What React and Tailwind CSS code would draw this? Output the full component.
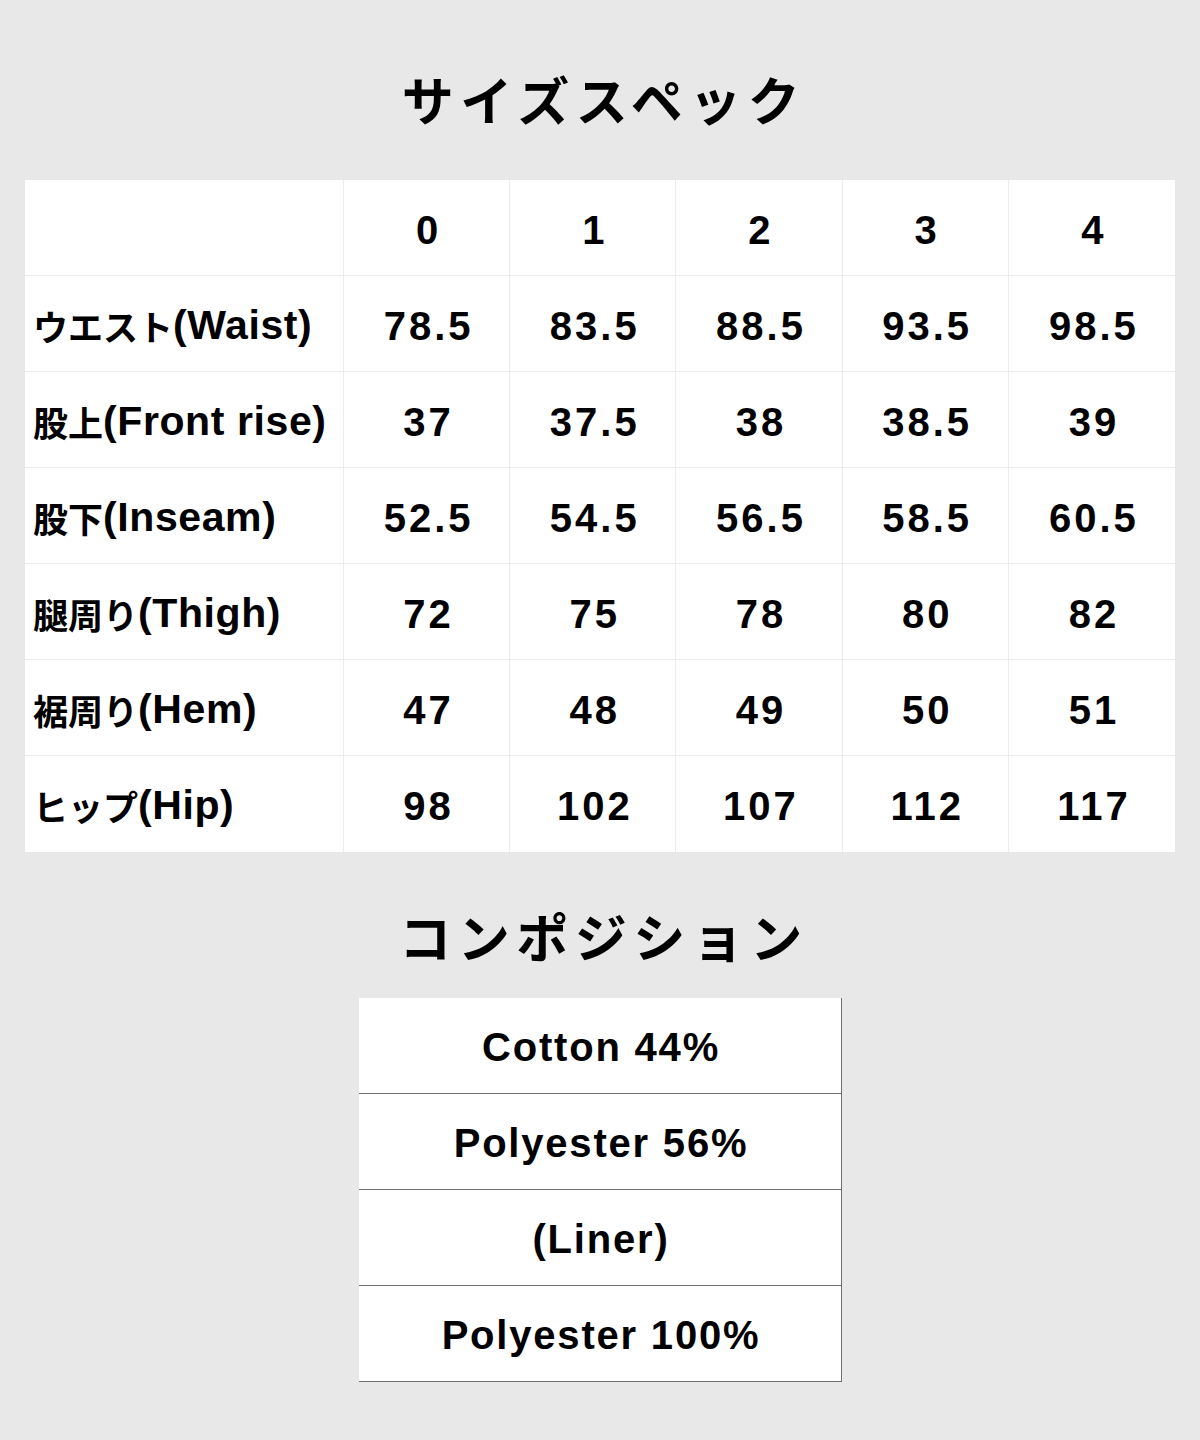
import React from "react";

const sizes = ["0", "1", "2", "3", "4"];

const specs = [
  { jp: "ウエスト", en: "(Waist)", values: ["78.5", "83.5", "88.5", "93.5", "98.5"] },
  { jp: "股上", en: "(Front rise)", values: ["37", "37.5", "38", "38.5", "39"] },
  { jp: "股下", en: "(Inseam)", values: ["52.5", "54.5", "56.5", "58.5", "60.5"] },
  { jp: "腿周り", en: "(Thigh)", values: ["72", "75", "78", "80", "82"] },
  { jp: "裾周り", en: "(Hem)", values: ["47", "48", "49", "50", "51"] },
  { jp: "ヒップ", en: "(Hip)", values: ["98", "102", "107", "112", "117"] },
];

const composition = ["Cotton 44%", "Polyester 56%", "(Liner)", "Polyester 100%"];

const Heading = ({ children, className }) => (
  <div className={`flex items-center justify-center pl-[8px] ${className}`}>
    <h2 className="font-['Noto_Sans_CJK_JP',sans-serif] text-[52px] font-bold leading-none tracking-[6.5px] text-black">
      {children}
    </h2>
  </div>
);

const App = () => {
  return (
    <div className="min-h-[1440px] w-full bg-[#e8e8e8] font-['Liberation_Sans','Noto_Sans_CJK_JP',sans-serif] text-black">
      <Heading className="h-[180px] pt-[18px]">サイズスペック</Heading>

      {/* Size table */}
      <div className="mx-[25px] grid grid-cols-[319px_repeat(5,1fr)] bg-white">
        <div className="h-[96px] border-r border-b border-[#ececec]" />
        {sizes.map((s, i) => (
          <div
            key={s}
            className={`flex h-[96px] items-center justify-center border-b border-[#ececec] pt-[4px] pl-[4px] text-[40px] font-bold tracking-[3px] ${
              i < sizes.length - 1 ? "border-r" : ""
            }`}
          >
            {s}
          </div>
        ))}

        {specs.map((row, r) => {
          const last = r === specs.length - 1;
          return (
            <React.Fragment key={row.en}>
              <div
                className={`flex h-[96px] items-center border-r border-[#ececec] pt-[3px] pl-[8px] font-bold ${
                  last ? "" : "border-b"
                }`}
              >
                <span className="font-['Noto_Sans_CJK_JP',sans-serif] text-[35px] leading-none">{row.jp}</span>
                <span className="text-[41px] leading-none tracking-[0.6px]">{row.en}</span>
              </div>
              {row.values.map((v, i) => (
                <div
                  key={i}
                  className={`flex h-[96px] items-center justify-center border-[#ececec] pt-[4px] pl-[4px] text-[40px] font-bold tracking-[3px] ${
                    last ? "" : "border-b"
                  } ${i < row.values.length - 1 ? "border-r" : ""}`}
                >
                  {v}
                </div>
              ))}
            </React.Fragment>
          );
        })}
      </div>

      <Heading className="h-[146px] pt-[22px]">コンポジション</Heading>

      {/* Composition table */}
      <div className="mx-auto w-[483px] bg-white">
        {composition.map((c) => (
          <div
            key={c}
            className="flex h-[96px] items-center justify-center border-r border-b border-[#707070] pt-[3px] pl-[3px] text-[40px] font-bold tracking-[1.8px]"
          >
            {c}
          </div>
        ))}
      </div>
    </div>
  );
};

export default App;
